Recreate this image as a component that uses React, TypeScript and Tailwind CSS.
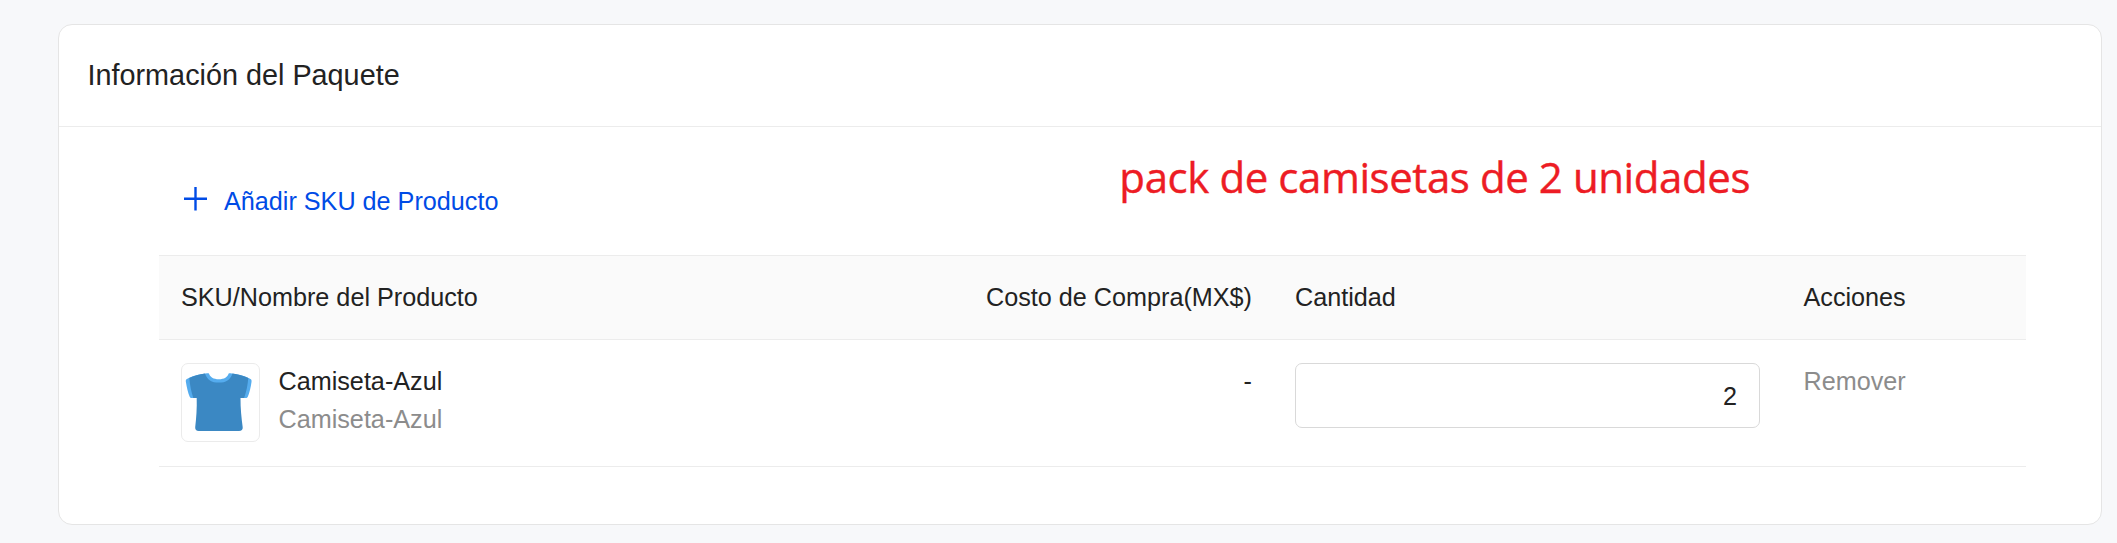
import type { ReactNode } from "react";

interface PackageItem {
  sku: string;
  name: string;
  cost: string;
  quantity: number;
}

const items: PackageItem[] = [
  { sku: "Camiseta-Azul", name: "Camiseta-Azul", cost: "-", quantity: 2 },
];

const COLUMNS = "grid grid-cols-[782px_332px_508.5px_244.5px]";

const PlusIcon = () => (
  <svg width="24" height="24" viewBox="0 0 24 24" fill="none" stroke="currentColor" strokeWidth="2.4">
    <path d="M11.500 0v23.500M0 11.700h23" />
  </svg>
);

const ShirtIcon = () => (
  <svg width="77" height="77" viewBox="0 -0.7 77 77">
    {/* Lighter trim on the sleeves and the collar */}
    <path
      fill="#55acee"
      d="M25 8.500C17 9.500 9 11.500 4.500 14.600c-.8.700-.8 1.600-.6 2.600C4.700 22.400 6.100 28.400 7.700 32c.4.900 1 1.300 2 1.300h54c1 0 1.700-.4 2.100-1.300C67.400 28.400 68.800 22.400 69.500 17.200c.2-1 .1-1.900-.6-2.600C64.500 11.500 56 9.500 48.400 8.500z"
    />
    <path fill="#fff" d="M26.600 8C28 12.500 31.500 14.500 36.800 14.500S45.600 12.500 47 8z" />
    <path
      fill="#3b88c3"
      d="M23 8.700C17 9.500 12 11 7.300 13.300c.6 7 2 14 4 20H14.700c.3 10-.4 20-1.500 29.300-.2 2.300 1.100 3.700 3.600 3.700h40.200c2.500 0 4-1.400 3.700-3.700C59.500 53.300 58.400 43.300 58.500 33.300h3.600c2.200-6 3.600-13 4.200-20C61.600 11 56.500 9.500 50.500 8.700 48.500 15 43.800 17.900 36.800 17.900S25 15 23 8.700z"
    />
  </svg>
);

const HeaderCell = ({ children, className = "px-[22px]" }: { children: ReactNode; className?: string }) => (
  <div className={className}>{children}</div>
);

const ItemRow = ({ item }: { item: PackageItem }) => (
  <div className={`${COLUMNS} h-[127px] items-start border-b border-[#ececec] pt-[23px]`}>
    <div className="flex gap-[18.5px] px-[22px]">
      <div className="size-[79px] shrink-0 rounded-[7px] border border-[#ebebeb]">
        <ShirtIcon />
      </div>
      <div className="-mt-px leading-[38px]">
        <div>{item.sku}</div>
        <div className="text-[#8c8c8c]">{item.name}</div>
      </div>
    </div>
    <div className="-mt-px pr-[21px] text-right leading-[38px]">{item.cost}</div>
    <div className="px-[22px]">
      <input
        className="block h-[65px] w-[465px] rounded-[7px] border border-[#d9d9d9] bg-white px-[22px] pt-0.5 text-right outline-none"
        defaultValue={item.quantity}
      />
    </div>
    <div className="-mt-px px-[22px] leading-[38px]">
      <button type="button" className="text-[#8c8c8c]">
        Remover
      </button>
    </div>
  </div>
);

const App = () => {
  return (
    <div className="h-[543px] w-[2117px] bg-[#f7f8fa] pt-6 pl-[58px] font-['Liberation_Sans',Arial,sans-serif] text-[25.2px] text-[#222]">
      <section className="h-[501px] w-[2044px] rounded-[14px] border border-[#e5e5e5] bg-white">
        <header className="flex h-[102px] items-center border-b border-[#ececec] px-[28.5px] text-[28.8px]">
          <h2>Información del Paquete</h2>
        </header>

        <div className="px-[100px]">
          <div className="flex h-[128px] items-start justify-between">
            <button
              type="button"
              className="mt-[55px] ml-[25px] flex items-center gap-4 leading-[38px] text-[#004be6]"
            >
              <span className="-mt-[5px]">
                <PlusIcon />
              </span>
              Añadir SKU de Producto
            </button>
            <p className="mt-[20px] mr-[251px] font-['Open_Sans','Noto_Sans',sans-serif] text-[42px] leading-[60px] tracking-[-0.42px] whitespace-nowrap text-[#ed1c24] [-webkit-text-stroke:0.4px_#ed1c24]">
              pack de camisetas de 2 unidades
            </p>
          </div>

          <div className="w-[1867px]">
            <div className={`${COLUMNS} h-[85px] items-center border-y border-[#ececec] bg-[#fafafa]`}>
              <HeaderCell>SKU/Nombre del Producto</HeaderCell>
              <HeaderCell className="pr-[21px] text-right">Costo de Compra(MX$)</HeaderCell>
              <HeaderCell>Cantidad</HeaderCell>
              <HeaderCell>Acciones</HeaderCell>
            </div>
            {items.map((item) => (
              <ItemRow key={item.sku} item={item} />
            ))}
          </div>
        </div>
      </section>
    </div>
  );
};

export default App;
